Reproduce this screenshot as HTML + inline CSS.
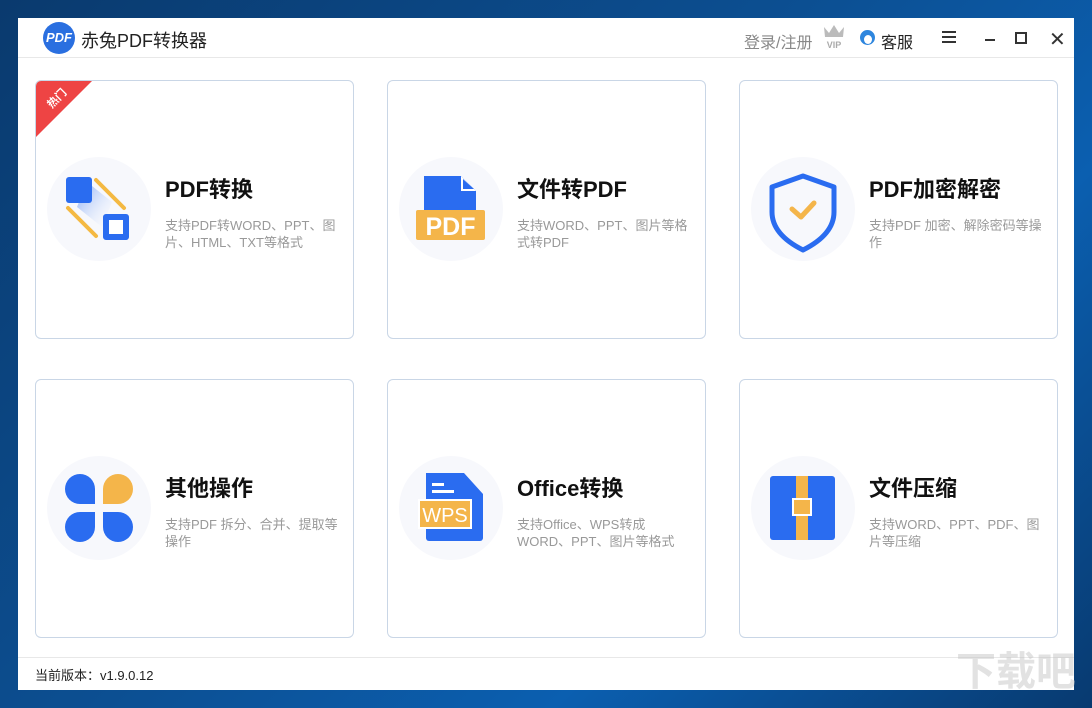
<!DOCTYPE html>
<html style="width:1092px;height:708px;overflow:hidden"><head><meta charset="utf-8"><style>
*{margin:0;padding:0;box-sizing:border-box}
body{width:1092px;height:708px;overflow:hidden;position:relative;font-family:"Liberation Sans","Noto Sans CJK SC",sans-serif;background:linear-gradient(135deg,#0a3a6e 0%,#0c4f92 45%,#0b5fb0 70%,#083a70 100%)}
.win{position:absolute;left:18px;top:18px;width:1056px;height:672px;background:#fff}
.hdr{position:absolute;left:0;top:0;width:1056px;height:40px;border-bottom:1px solid #e8e8e8}
.logo{position:absolute;left:25px;top:4px;width:32px;height:32px;border-radius:50%;background:#2a6fe0;color:#fff;font-weight:bold;font-size:13px;line-height:32px;text-align:center;font-style:italic}
.title{position:absolute;left:63px;top:9px;font-size:18px;color:#222}
.hr{position:absolute;top:11px;font-size:16px}
.card{position:absolute;width:319px;height:259px;border:1px solid #c9d6e6;border-radius:6px;background:#fff;overflow:hidden}
.circ{position:absolute;left:11px;top:76px;width:104px;height:104px;border-radius:50%;background:#f7f8fc}
.ct{position:absolute;left:129px;top:91px;font-size:22px;font-weight:bold;color:#111}
.cd{position:absolute;left:129px;top:136px;width:180px;font-size:13px;line-height:17px;color:#999}
.ic{position:absolute;left:11px;top:76px}
.foot{position:absolute;left:0;top:639px;width:1056px;border-top:1px solid #e8e8e8;height:33px}
</style></head><body>
<div class="win">
<div class="hdr">
<div class="logo">PDF</div>
<div class="title">赤兔PDF转换器</div>
<div class="hr" style="left:726px;color:#888">登录/注册</div>
<div style="position:absolute;left:804px;top:6px;width:24px;height:26px;color:#aaa;font-size:9px;font-weight:bold;text-align:center">
<svg width="24" height="14" viewBox="0 0 24 14"><path d="M2 3 L7 9 L12 1 L17 9 L22 3 L21 13 L3 13Z" fill="#bbb"/></svg><div style="line-height:10px">VIP</div></div>
<div style="position:absolute;left:842px;top:12px;width:15px;height:15px;border-radius:50%;background:#2e86de"><div style="position:absolute;left:4px;top:5px;width:8px;height:9px;border-radius:50%;background:#fff"></div></div>
<div class="hr" style="left:863px;color:#222">客服</div>
<div style="position:absolute;left:924px;top:13px;width:14px;height:12px;border-top:2px solid #333;border-bottom:2px solid #333"><div style="margin-top:3px;height:2px;background:#333"></div></div>
<div style="position:absolute;left:967px;top:21px;width:10px;height:2px;background:#333"></div>
<div style="position:absolute;left:997px;top:14px;width:12px;height:12px;border:2px solid #333"></div>
<div style="position:absolute;left:1031px;top:9px;font-size:20px;color:#333">✕</div>
</div>

<div class="card" style="left:17px;top:62px">
<svg style="position:absolute;left:0;top:0" width="56" height="56"><path d="M0 0 H56 L0 56Z" fill="#ee4444"/><text x="10" y="26" transform="rotate(-45 15 20)" fill="#fff" font-size="11" font-weight="bold" font-family="Noto Sans CJK SC">热门</text></svg>
<div class="circ"></div>
<svg class="ic" width="104" height="104"><defs><linearGradient id="g" x1="0" y1="0" x2="1" y2="1"><stop offset="0" stop-color="#2a6cf0"/><stop offset="1" stop-color="#fff" stop-opacity="0"/></linearGradient></defs>
<path d="M40 25 L65 45 L55 70 L30 50Z" fill="url(#g)" opacity=".6"/>
<rect x="19" y="20" width="26" height="26" rx="3" fill="#2a6cf0"/>
<line x1="49" y1="23" x2="77" y2="51" stroke="#f4b942" stroke-width="4" stroke-linecap="round"/>
<line x1="21" y1="51" x2="49" y2="79" stroke="#f4b942" stroke-width="4" stroke-linecap="round"/>
<rect x="56" y="57" width="26" height="26" rx="3" fill="#2a6cf0"/><rect x="62" y="63" width="14" height="14" fill="#fff"/></svg>
<div class="ct">PDF转换</div><div class="cd">支持PDF转WORD、PPT、图片、HTML、TXT等格式</div></div>

<div class="card" style="left:369px;top:62px">
<div class="circ"></div>
<svg class="ic" width="104" height="104"><path d="M25 19 H62 L77 34 V55 H25Z" fill="#2a6cf0"/><path d="M62 19 V34 H77Z" fill="#fff"/><path d="M64 22 V32 H75Z" fill="#2a6cf0"/>
<rect x="17" y="53" width="69" height="30" rx="2" fill="#f4b54a"/><text x="51.5" y="78" text-anchor="middle" fill="#fff" font-size="25" font-weight="bold" font-family="Liberation Sans">PDF</text></svg>
<div class="ct">文件转PDF</div><div class="cd">支持WORD、PPT、图片等格式转PDF</div></div>

<div class="card" style="left:721px;top:62px">
<div class="circ"></div>
<svg class="ic" width="104" height="104"><path d="M52 19 L83 30 V55 C83 72 70 84 52 93 C34 84 21 72 21 55 V30Z" fill="none" stroke="#2a6cf0" stroke-width="5" stroke-linejoin="round"/><path d="M41 52 L50 60 L63 46" fill="none" stroke="#f4b54a" stroke-width="5" stroke-linecap="round" stroke-linejoin="round"/></svg>
<div class="ct">PDF加密解密</div><div class="cd">支持PDF 加密、解除密码等操作</div></div>

<div class="card" style="left:17px;top:361px">
<div class="circ"></div>
<svg class="ic" width="104" height="104"><path d="M48 48 H33 A15 15 0 0 1 33 18 A15 15 0 0 1 48 33Z" fill="#2a6cf0"/><path d="M56 48 H71 A15 15 0 0 0 71 18 A15 15 0 0 0 56 33Z" fill="#f4b54a"/><path d="M48 56 H33 A15 15 0 0 0 33 86 A15 15 0 0 0 48 71Z" fill="#2a6cf0"/><path d="M56 56 H71 A15 15 0 0 1 71 86 A15 15 0 0 1 56 71Z" fill="#2a6cf0"/></svg>
<div class="ct">其他操作</div><div class="cd">支持PDF 拆分、合并、提取等操作</div></div>

<div class="card" style="left:369px;top:361px">
<div class="circ"></div>
<svg class="ic" width="104" height="104"><path d="M27 17 H65 L84 38 V82 A3 3 0 0 1 81 85 H30 A3 3 0 0 1 27 82Z" fill="#2a6cf0"/><rect x="33" y="27" width="12" height="3" fill="#fff"/><rect x="33" y="34" width="22" height="3" fill="#fff"/>
<rect x="20" y="44" width="52" height="28" fill="#f4b54a" stroke="#fff" stroke-width="2"/><text x="46" y="66" text-anchor="middle" fill="#fff" font-size="20" font-family="Liberation Sans">WPS</text></svg>
<div class="ct">Office转换</div><div class="cd">支持Office、WPS转成WORD、PPT、图片等格式</div></div>

<div class="card" style="left:721px;top:361px">
<div class="circ"></div>
<svg class="ic" width="104" height="104"><rect x="19" y="20" width="65" height="64" rx="3" fill="#2a6cf0"/><rect x="45" y="20" width="12" height="64" fill="#f4b54a"/><rect x="42" y="43" width="18" height="16" fill="#f4b54a" stroke="#fff" stroke-width="2"/></svg>
<div class="ct">文件压缩</div><div class="cd">支持WORD、PPT、PDF、图片等压缩</div></div>

<div class="foot"><div style="position:absolute;left:17px;top:7px;font-size:13px;color:#222">当前版本：v1.9.0.12</div></div>
</div>
<div style="position:absolute;z-index:5;left:956px;top:640px;white-space:nowrap;font-size:40px;line-height:56px;font-weight:bold;color:rgba(190,190,190,.45);font-family:'Noto Sans CJK SC',sans-serif">下载吧</div>
</body></html>
